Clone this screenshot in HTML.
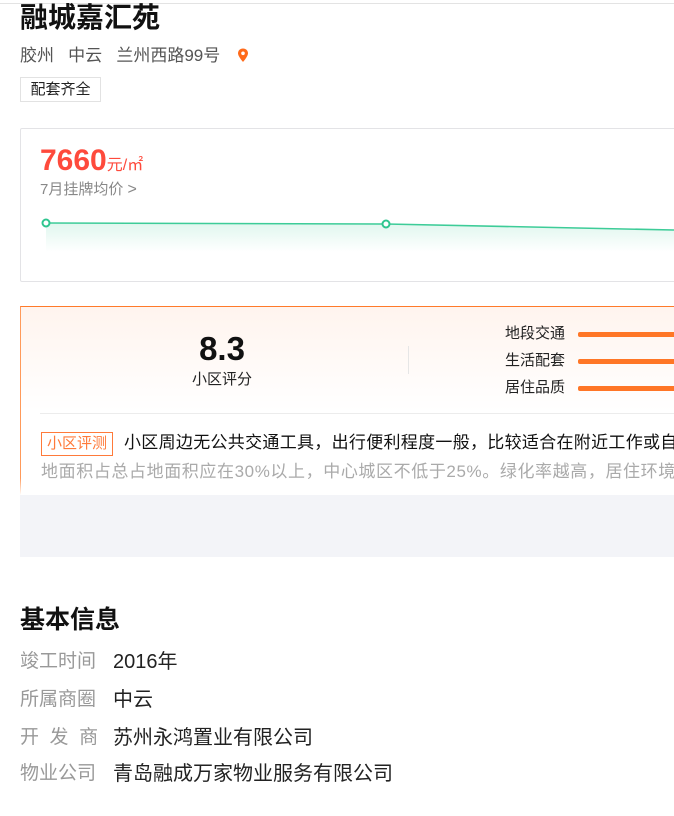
<!DOCTYPE html>
<html><head><meta charset="utf-8"><style>
*{margin:0;padding:0;box-sizing:border-box}
body{width:674px;height:816px;overflow:hidden;background:#fff;font-family:"Liberation Sans","Noto Sans CJK SC",sans-serif;position:relative}
.a{position:absolute;white-space:nowrap}
</style></head><body>
<div class="a" style="left:0;top:3px;width:674px;height:1px;background:#e3e3e3"></div>
<div class="a" style="left:20px;top:0px;font-size:28px;line-height:36px;font-weight:bold;color:#111">融城嘉汇苑</div>
<div class="a" style="left:20px;top:44px;font-size:17px;line-height:24px;color:#555">胶州&nbsp;&nbsp;&nbsp;中云&nbsp;&nbsp;&nbsp;兰州西路99号</div>
<svg class="a" style="left:237px;top:48px" width="12" height="15" viewBox="0 0 12 15"><path d="M6 0.5C3 0.5 1 2.7 1 5.3 1 8.5 6 14 6 14s5-5.5 5-8.7C11 2.7 9 0.5 6 0.5z" fill="#ff6a1a"/><circle cx="6" cy="5.3" r="1.8" fill="#fff"/></svg>
<div class="a" style="left:20px;top:77px;width:81px;height:25px;border:1px solid #e2e2e2;font-size:15px;line-height:23px;text-align:center;color:#222">配套齐全</div>

<div class="a" style="left:20px;top:128px;width:680px;height:154px;border:1px solid #e3e3e6;border-radius:2px"></div>
<div class="a" style="left:40px;top:144px;font-size:30px;line-height:34px;font-weight:bold;color:#fe4a3c">7660<span style="font-size:16px;font-weight:normal">元/㎡</span></div>
<div class="a" style="left:40px;top:180px;font-size:15px;line-height:20px;color:#888">7月挂牌均价 <span style="font-size:16px">&gt;</span></div>
<svg class="a" style="left:0;top:210px" width="674" height="50"><defs><linearGradient id="g" x1="0" y1="0" x2="0" y2="1"><stop offset="0" stop-color="#2ec58f" stop-opacity=".15"/><stop offset="1" stop-color="#2ec58f" stop-opacity="0"/></linearGradient></defs><path d="M46 13L386 14L674 20V42H46Z" fill="url(#g)"/><path d="M46 13L386 14L674 20" stroke="#3dcc98" stroke-width="1.5" fill="none"/><circle cx="46" cy="13" r="3.5" fill="#fff" stroke="#2ec58f" stroke-width="2"/><circle cx="386" cy="14" r="3.5" fill="#fff" stroke="#2ec58f" stroke-width="2"/></svg>

<div class="a" style="left:20px;top:306px;width:680px;height:190px;border-top:1px solid #ff7a2a;border-left:1px solid #ff9a5a;background:linear-gradient(#fff4ee,#fff 55%);"></div>
<div class="a" style="left:172px;top:330px;width:100px;text-align:center;font-size:33px;line-height:38px;font-weight:bold;color:#111">8.3</div>
<div class="a" style="left:172px;top:370px;width:100px;text-align:center;font-size:15px;line-height:20px;color:#222">小区评分</div>
<div class="a" style="left:408px;top:346px;width:1px;height:28px;background:#e6e6e6"></div>
<div class="a" style="left:505px;top:324px;font-size:15px;line-height:20px;color:#222">地段交通</div>
<div class="a" style="left:505px;top:351px;font-size:15px;line-height:20px;color:#222">生活配套</div>
<div class="a" style="left:505px;top:378px;font-size:15px;line-height:20px;color:#222">居住品质</div>
<div class="a" style="left:578px;top:332px;width:100px;height:5px;background:#ff7626;border-radius:2px"></div>
<div class="a" style="left:578px;top:359px;width:100px;height:5px;background:#ff7626;border-radius:2px"></div>
<div class="a" style="left:578px;top:386px;width:100px;height:5px;background:#ff7626;border-radius:2px"></div>
<div class="a" style="left:40px;top:413px;width:640px;height:1px;background:#ececec"></div>
<div class="a" style="left:41px;top:432px;width:72px;height:24px;border:1px solid #ff7a3a;font-size:15px;line-height:22px;text-align:center;color:#ff7a3a">小区评测</div>
<div class="a" style="left:124px;top:431px;font-size:17px;line-height:24px;color:#111;letter-spacing:0.3px">小区周边无公共交通工具，出行便利程度一般，比较适合在附近工作或自</div>
<div class="a" style="left:41px;top:460px;font-size:17px;line-height:24px;color:#aaa;letter-spacing:0.6px">地面积占总占地面积应在30%以上，中心城区不低于25%。绿化率越高，居住环境</div>
<div class="a" style="left:20px;top:478px;width:660px;height:17px;background:linear-gradient(rgba(255,255,255,0),#fff)"></div>
<div class="a" style="left:20px;top:495px;width:660px;height:62px;background:#f3f4f8"></div>

<div class="a" style="left:20px;top:604px;font-size:25px;line-height:32px;font-weight:bold;color:#111">基本信息</div>
<div class="a" style="left:20px;top:650px;font-size:19px;line-height:24px;color:#999">竣工时间</div>
<div class="a" style="left:20px;top:688px;font-size:19px;line-height:24px;color:#999">所属商圈</div>
<div class="a" style="left:20px;top:726px;font-size:19px;line-height:24px;color:#999">开&nbsp;&nbsp;发&nbsp;&nbsp;商</div>
<div class="a" style="left:20px;top:762px;font-size:19px;line-height:24px;color:#999">物业公司</div>
<div class="a" style="left:113px;top:650px;font-size:20px;line-height:24px;color:#222">2016年</div>
<div class="a" style="left:113px;top:688px;font-size:20px;line-height:24px;color:#222">中云</div>
<div class="a" style="left:113px;top:726px;font-size:20px;line-height:24px;color:#222">苏州永鸿置业有限公司</div>
<div class="a" style="left:113px;top:762px;font-size:20px;line-height:24px;color:#222">青岛融成万家物业服务有限公司</div>
</body></html>
